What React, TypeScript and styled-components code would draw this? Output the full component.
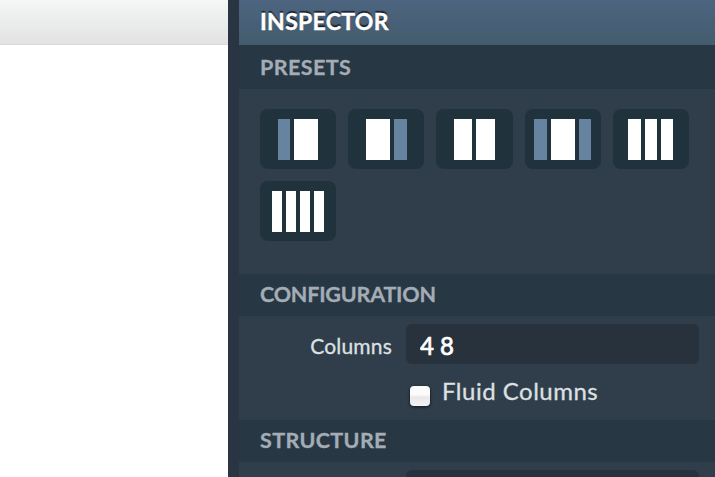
import React from "react";
import styled, { createGlobalStyle } from "styled-components";

const GlobalStyle = createGlobalStyle`
  * { box-sizing: border-box; }
  body { margin: 0; overflow: hidden; background: #fff; }
`;

const Page = styled.div`
  display: grid;
  grid-template-columns: 228px 11px 1fr;
  width: 715px;
  height: 477px;
  overflow: hidden;
  font-family: Lato, sans-serif;
`;

const Canvas = styled.main`
  background: #fff;
`;

const Toolbar = styled.div`
  height: 45px;
  background: linear-gradient(#f4f7f6, #e2e2e2);
  border-bottom: 1px solid #d9d9d9;
`;

const Divider = styled.div`
  background: #293542;
`;

const Panel = styled.aside`
  min-width: 0;
  overflow: hidden;
  background: #303d4a;
`;

const PanelHeader = styled.header`
  height: 45px;
  padding: 0 21px;
  background: linear-gradient(#4d6480, #435c6d);
`;

const PanelTitle = styled.h1`
  margin: 0;
  font-size: 23px;
  line-height: 42px;
  font-weight: 700;
  letter-spacing: 0.3px;
  color: #fff;
  text-shadow: 0 -2px 1px #17212b;
  -webkit-text-stroke: 0.4px #fff;
`;

const SectionTitle = styled.h2<{ $height: number; $spacing: number }>`
  height: ${(p) => p.$height}px;
  margin: 0;
  padding: 0 21px;
  background: #273744;
  color: #a4adb5;
  font-size: 21.5px;
  font-weight: 700;
  line-height: ${(p) => (p.$height > 42 ? 44 : 40)}px;
  letter-spacing: ${(p) => p.$spacing}px;
  -webkit-text-stroke: 0.3px #a4adb5;
`;

const PresetList = styled.div`
  display: flex;
  flex-wrap: wrap;
  align-content: flex-start;
  gap: 12px;
  height: 185px;
  padding: 20px 21px;
`;

const PresetButton = styled.button`
  display: flex;
  align-items: center;
  justify-content: center;
  gap: 4px;
  width: 76.2px;
  height: 60px;
  padding: 1px 0 0;
  border: 0;
  border-radius: 8px;
  background: #20323c;
`;

const Column = styled.span<{ $width: number; $side?: boolean }>`
  width: ${(p) => p.$width}px;
  height: 41px;
  background: ${(p) => (p.$side ? "#6683a0" : "#fff")};
`;

const Form = styled.div`
  height: 104px;
  padding: 8px 16px 0 0;
`;

const FieldRow = styled.label`
  display: grid;
  grid-template-columns: 153px 293px;
  column-gap: 14px;
  align-items: center;
`;

const FieldLabel = styled.span`
  padding-top: 3px;
  text-align: right;
  font-size: 21px;
  line-height: 30px;
  letter-spacing: 0.2px;
  color: #dde0e2;
  -webkit-text-stroke: 0.3px #dde0e2;
`;

const TextInput = styled.input`
  width: 293px;
  height: 40px;
  padding: 3px 14px 0;
  border: 0;
  border-radius: 6px;
  outline: 0;
  background: #27323c;
  color: #fff;
  font: 500 24px Lato, sans-serif;
  -webkit-text-stroke: 0.6px #fff;
`;

const CheckRow = styled.label`
  display: flex;
  align-items: flex-start;
  gap: 12px;
  padding: 11px 0 0 171px;
`;

const Checkbox = styled.input`
  appearance: none;
  width: 20px;
  height: 20px;
  margin: 11px 0 0;
  border-radius: 4px;
  background: linear-gradient(#fbfbfb 45%, #e9e7e7 55%, #f4f2f2);
  box-shadow: 0 1px 2px 1px #1c2832;
`;

const CheckLabel = styled.span`
  font-size: 24px;
  line-height: 32px;
  letter-spacing: 0.5px;
  color: #dde0e2;
  -webkit-text-stroke: 0.3px #dde0e2;
`;

const NextField = styled.div`
  padding: 8px 0 0 167px;
`;

type Col = [number, boolean?];

const presets: { name: string; cols: Col[] }[] = [
  { name: "Left sidebar", cols: [[12.5, true], [24.3]] },
  { name: "Right sidebar", cols: [[24.3], [12.5, true]] },
  { name: "Two columns", cols: [[18.5], [18.5]] },
  { name: "Two sidebars", cols: [[12.5, true], [24.3], [12.5, true]] },
  { name: "Three columns", cols: [[12.4], [12.4], [12.4]] },
  { name: "Four columns", cols: [[10], [10], [10], [10]] },
];

export default function App() {
  return (
    <Page>
      <GlobalStyle />
      <Canvas>
        <Toolbar />
      </Canvas>
      <Divider />
      <Panel>
        <PanelHeader>
          <PanelTitle>INSPECTOR</PanelTitle>
        </PanelHeader>
        <SectionTitle $height={44} $spacing={0.4}>PRESETS</SectionTitle>
        <PresetList>
          {presets.map((p) => (
            <PresetButton key={p.name} aria-label={p.name}>
              {p.cols.map(([width, side], i) => (
                <Column key={i} $width={width} $side={side} />
              ))}
            </PresetButton>
          ))}
        </PresetList>
        <SectionTitle $height={42} $spacing={-0.2}>CONFIGURATION</SectionTitle>
        <Form>
          <FieldRow>
            <FieldLabel>Columns</FieldLabel>
            <TextInput defaultValue="4 8" />
          </FieldRow>
          <CheckRow>
            <Checkbox type="checkbox" />
            <CheckLabel>Fluid Columns</CheckLabel>
          </CheckRow>
        </Form>
        <SectionTitle $height={42} $spacing={0.35}>STRUCTURE</SectionTitle>
        <NextField>
          <TextInput aria-label="Structure" />
        </NextField>
      </Panel>
    </Page>
  );
}
